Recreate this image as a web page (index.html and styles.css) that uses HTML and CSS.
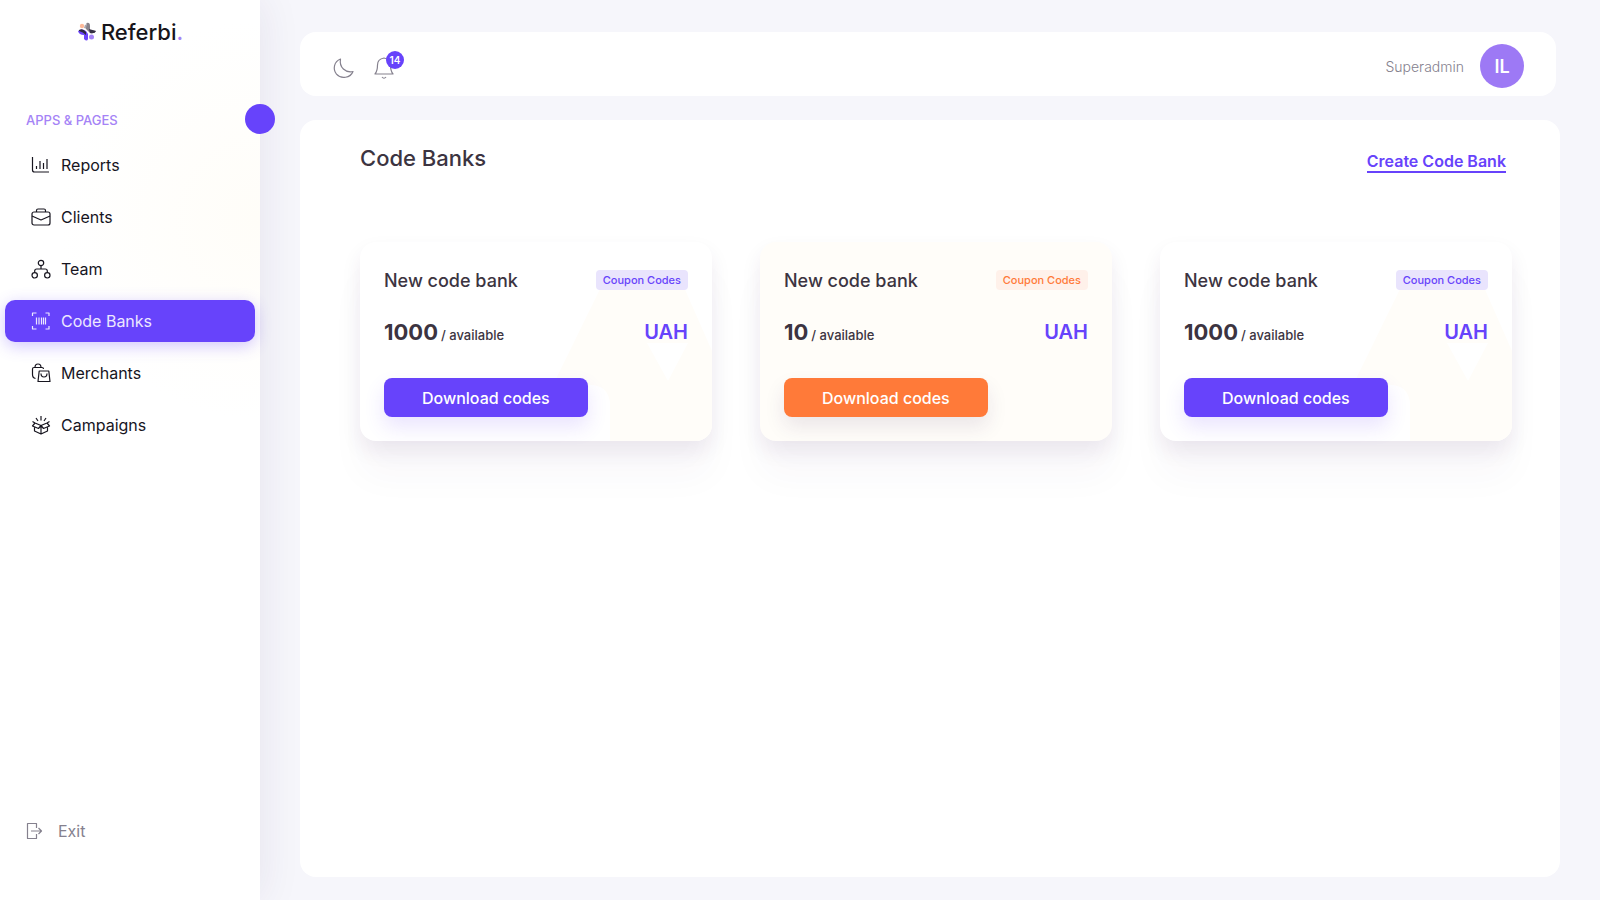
FILE: index.html
```html
<!DOCTYPE html>
<html lang="en">
	<head>
		<meta charset="UTF-8">
		<title>Referbi - Code Banks</title>
		<link rel="stylesheet" href="styles.css">
	</head>
	<body>
		<aside class="sidebar">
			<a href="#" class="logo">
				<svg width="20" height="20" viewBox="0 0 20 20">
					<circle cx="5" cy="4" r="2.2" fill="#fdb999"/>
					<path d="M8 2.500Q10 3 10 7L7 6Z" fill="#aaa6ad"/>
					<path d="M9.500 1Q13 0 13 4V8L19 9Q17 12 13 11L9 7Z" fill="#85818a"/>
					<path d="M12 7L19 9Q18 12 13 11Z" fill="#363043"/>
					<path d="M1 9Q5 6 9 9L11 12V17Q10 20 7 17V13Q2 13 1 9Z" fill="#6c45fb"/>
					<path d="M2 8Q6 6 9 10V13Q6 10 2 9Z" fill="#2d2940"/>
					<circle cx="14.500" cy="15" r="2.500" fill="#a583f6"/>
				</svg>
				<span class="name">Referbi<span class="dot">.</span></span>
			</a>
			<button class="toggle" type="button" aria-label="Toggle menu"></button>
			<p class="label">APPS &amp; PAGES</p>
			<nav class="menu">
				<a href="#">
					<svg class="icon" width="20" height="20" viewBox="0 0 20 20"><path d="M1.500 2v13q0 2 2 2H18M5.500 11v3M9 6v8M12.500 8v6M16 4v10"/></svg>
					Reports
				</a>
				<a href="#">
					<svg class="icon" width="20" height="20" viewBox="0 0 20 20"><rect x="1" y="5" width="18" height="13" rx="2"/><path d="M5.500 5V3.500q0-1.500 1.500-1.500h6q1.500 0 1.500 1.500V5M1 9l9 4 9-4"/></svg>
					Clients
				</a>
				<a href="#">
					<svg class="icon" width="20" height="20" viewBox="0 0 20 20"><circle cx="10" cy="4" r="2.700"/><circle cx="3.700" cy="16.300" r="2.700"/><circle cx="16.300" cy="16.300" r="2.700"/><path d="M10 7v3M3.700 13.500V12q0-2 2-2h8.600q2 0 2 2v1.500"/></svg>
					Team
				</a>
				<a href="#" class="active">
					<svg class="icon" width="20" height="20" viewBox="0 0 20 20"><path d="M1.500 5V2h4M14.500 2h3.500v3M1.500 15v3h4M14.500 18h3.500v-3M5.500 6.500v7M8 6.500v7M10.500 6.500v7M12.500 6.500v7M14.500 6.500v7"/></svg>
					Code Banks
				</a>
				<a href="#">
					<svg class="icon" width="20" height="20" viewBox="0 0 20 20"><path d="M4.500 15.500q-3-.5-3-4V6q0-1.500 1.500-1.500h8q1.500 0 1.500 1.500M4 4.500q0-3.500 3-3.500t3 3.500M8.200 8h9.600l1.200 10.500H7zM10 10.500q0 3.500 3 3.500t3-3.500"/></svg>
					Merchants
				</a>
				<a href="#">
					<svg class="icon" width="20" height="20" viewBox="0 0 20 20"><path d="M10 1v4.500M5 3l2 3M15 3l-2 3M10 10.500L4 8l-2.500 3 6 2.500zM10 10.500L16 8l2.500 3-6 2.500zM3.500 12.500v3.500l6.500 3 6.500-3v-3.500M10 10.500V19M4 8l-2.500-1.500M16 8l2.500-1.500"/></svg>
					Campaigns
				</a>
			</nav>
			<a href="#" class="exit">
				<svg class="icon" width="18" height="18" viewBox="0 0 18 18"><path d="M10.500 6V1.500h-9v15h9V12M5 9h10.500M12.500 6l3 3-3 3"/></svg>
				Exit
			</a>
		</aside>

		<div class="page">
			<header class="topbar">
				<button class="tool" type="button" aria-label="Dark mode">
					<svg class="icon" width="24" height="24" viewBox="0 0 24 24"><path d="M8.500 3C2 5.500 .500 13 4.500 18.200C9 23.500 18.500 22 21 15.500C13.500 17 7 11.500 8.500 3Z"/></svg>
				</button>
				<button class="tool" type="button" aria-label="Notifications">
					<svg class="icon" width="24" height="24" viewBox="0 0 24 24"><path d="M3 18q2.500-3 2.500-9t6.500-7q6.500 1 6.500 7t2.500 9zM10 21q2 2.500 4 0"/></svg>
					<span class="count">14</span>
				</button>
				<span class="role">Superadmin</span>
				<button class="avatar" type="button">IL</button>
			</header>

			<main class="content">
				<div class="head">
					<h1>Code Banks</h1>
					<a href="#" class="create">Create Code Bank</a>
				</div>
				<div class="cards">
					<section class="card">
						<svg class="shape" width="352" height="198" viewBox="0 0 352 198"><path fill-rule="evenodd" d="M242 42H323L352 108V198H250V160Q248 142 230 142H193ZM287 100H328L308 138Z"/></svg>
						<div class="row">
							<h2>New code bank</h2>
							<span class="tag">Coupon Codes</span>
						</div>
						<div class="row">
							<p class="amount"><b>1000</b>/ available</p>
							<span class="currency">UAH</span>
						</div>
						<button class="download" type="button">Download codes</button>
					</section>
					<section class="card orange">
						<div class="row">
							<h2>New code bank</h2>
							<span class="tag">Coupon Codes</span>
						</div>
						<div class="row">
							<p class="amount"><b>10</b>/ available</p>
							<span class="currency">UAH</span>
						</div>
						<button class="download" type="button">Download codes</button>
					</section>
					<section class="card">
						<svg class="shape" width="352" height="198" viewBox="0 0 352 198"><path fill-rule="evenodd" d="M242 42H323L352 108V198H250V160Q248 142 230 142H193ZM287 100H328L308 138Z"/></svg>
						<div class="row">
							<h2>New code bank</h2>
							<span class="tag">Coupon Codes</span>
						</div>
						<div class="row">
							<p class="amount"><b>1000</b>/ available</p>
							<span class="currency">UAH</span>
						</div>
						<button class="download" type="button">Download codes</button>
					</section>
				</div>
			</main>
		</div>
	</body>
</html>
```
FILE: styles.css
```css
*{
	padding:0;
	margin:0;
	box-sizing:border-box;
}
body{
	display:flex;
	min-height:100vh;
	background:#f6f6fb;
	font-family:Inter,"Open Sans",sans-serif;
	color:#3c3441;
}
a{
	color:inherit;
	text-decoration:none;
}
button{
	border:0;
	background:none;
	font-family:inherit;
	color:inherit;
	cursor:pointer;
}
.icon{
	flex:none;
	fill:none;
	stroke:currentColor;
	stroke-width:1.2;
	stroke-linejoin:round;
}

/* sidebar */
.sidebar{
	position:relative;
	flex:none;
	display:flex;
	flex-direction:column;
	width:260px;
	padding:18px 5px 48px;
	background:radial-gradient(circle at 100% 220px,#fffdf8,#fff 200px);
	box-shadow:0 0 40px rgba(60,30,90,0.09);
}
.logo{
	display:flex;
	justify-content:center;
	align-items:center;
	gap:4px;
	height:28px;
	color:#17151a;
}
.name{
	font-size:22px;
	font-weight:500;
}
.dot{
	color:#a583f6;
}
.toggle{
	position:absolute;
	top:104px;
	right:-15px;
	width:30px;
	height:30px;
	border-radius:50%;
	background:#6743fb;
}
.label{
	margin-top:66px;
	padding-left:21px;
	font-size:13px;
	line-height:16px;
	font-weight:500;
	color:#a583f6;
}
.menu{
	display:flex;
	flex-direction:column;
	gap:10px;
	margin-top:16px;
}
.menu a{
	display:flex;
	align-items:center;
	gap:10px;
	height:42px;
	padding-left:26px;
	border-radius:10px;
	font-size:16px;
	color:#17151f;
}
.menu .active{
	background:#6743fb;
	box-shadow:0 4px 16px rgba(103,67,251,0.3);
	color:#ece7ff;
}
.exit{
	display:flex;
	align-items:center;
	gap:14px;
	height:42px;
	margin-top:auto;
	padding-left:21px;
	font-size:16px;
	color:#85818e;
}

/* right side */
.page{
	flex:1;
	display:flex;
	flex-direction:column;
	gap:24px;
	min-width:0;
	padding:32px 40px 23px;
}
.topbar{
	display:flex;
	align-items:center;
	height:64px;
	margin-right:4px;
	padding:4px 32px 0;
	border-radius:16px;
	background:#fff;
}
.tool{
	position:relative;
	width:24px;
	height:24px;
	margin:4px 16px 0 0;
	color:#85818e;
}
.count{
	position:absolute;
	top:-5px;
	right:-8px;
	width:18px;
	height:18px;
	border-radius:50%;
	background:#6743fb;
	font-size:10px;
	line-height:18px;
	font-weight:600;
	color:#fff;
}
.role{
	margin:0 16px 0 auto;
	font-size:14px;
	font-weight:300;
	color:#85818e;
}
.avatar{
	width:44px;
	height:44px;
	border-radius:50%;
	background:#9d79f5;
	font-size:18px;
	font-weight:600;
	color:#fff;
}
.content{
	flex:1;
	padding:22px 48px 48px 60px;
	border-radius:16px;
	background:#fff;
}
.head{
	display:flex;
	justify-content:space-between;
	align-items:center;
	height:32px;
	padding-right:6px;
}
h1{
	font-size:22px;
	font-weight:500;
}
.create{
	margin-top:8px;
	border-bottom:2px solid #6743fb;
	font-size:16px;
	line-height:20px;
	font-weight:600;
	color:#6743fb;
}
.cards{
	display:grid;
	grid-template-columns:repeat(3,1fr);
	gap:48px;
	margin-top:68px;
}
.card{
	position:relative;
	display:flex;
	flex-direction:column;
	gap:24px;
	padding:24px;
	border-radius:16px;
	background:#fff;
	box-shadow:0 10px 20px rgba(60,30,90,0.08),0 36px 36px rgba(60,30,90,0.03);
}
.shape{
	position:absolute;
	right:0;
	bottom:0;
	border-radius:16px;
	fill:#fffdf9;
}
.row{
	position:relative;
	display:flex;
	justify-content:space-between;
	align-items:center;
	height:28px;
}
h2{
	font-size:18px;
	font-weight:500;
}
.tag{
	padding:0 7px;
	border-radius:4px;
	background:#e9e4fd;
	font-size:11px;
	line-height:20px;
	font-weight:500;
	color:#6743fb;
}
.amount{
	font-size:13px;
	font-weight:500;
}
.amount b{
	margin-right:3px;
	font-size:22px;
	font-weight:700;
}
.currency{
	font-size:20px;
	font-weight:600;
	color:#6743fb;
}
.download{
	position:relative;
	align-self:flex-start;
	height:39px;
	margin-top:8px;
	padding:0 38px;
	border-radius:8px;
	background:#6743fb;
	box-shadow:0 10px 20px rgba(103,67,251,0.14);
	font-size:16px;
	font-weight:500;
	color:#fff;
}
.orange{
	background:#fffdf9;
}
.orange .tag{
	background:#fff1ea;
	color:#ff7a39;
}
.orange .download{
	background:#ff7a39;
	box-shadow:0 10px 20px rgba(60,30,90,0.1);
}
```
